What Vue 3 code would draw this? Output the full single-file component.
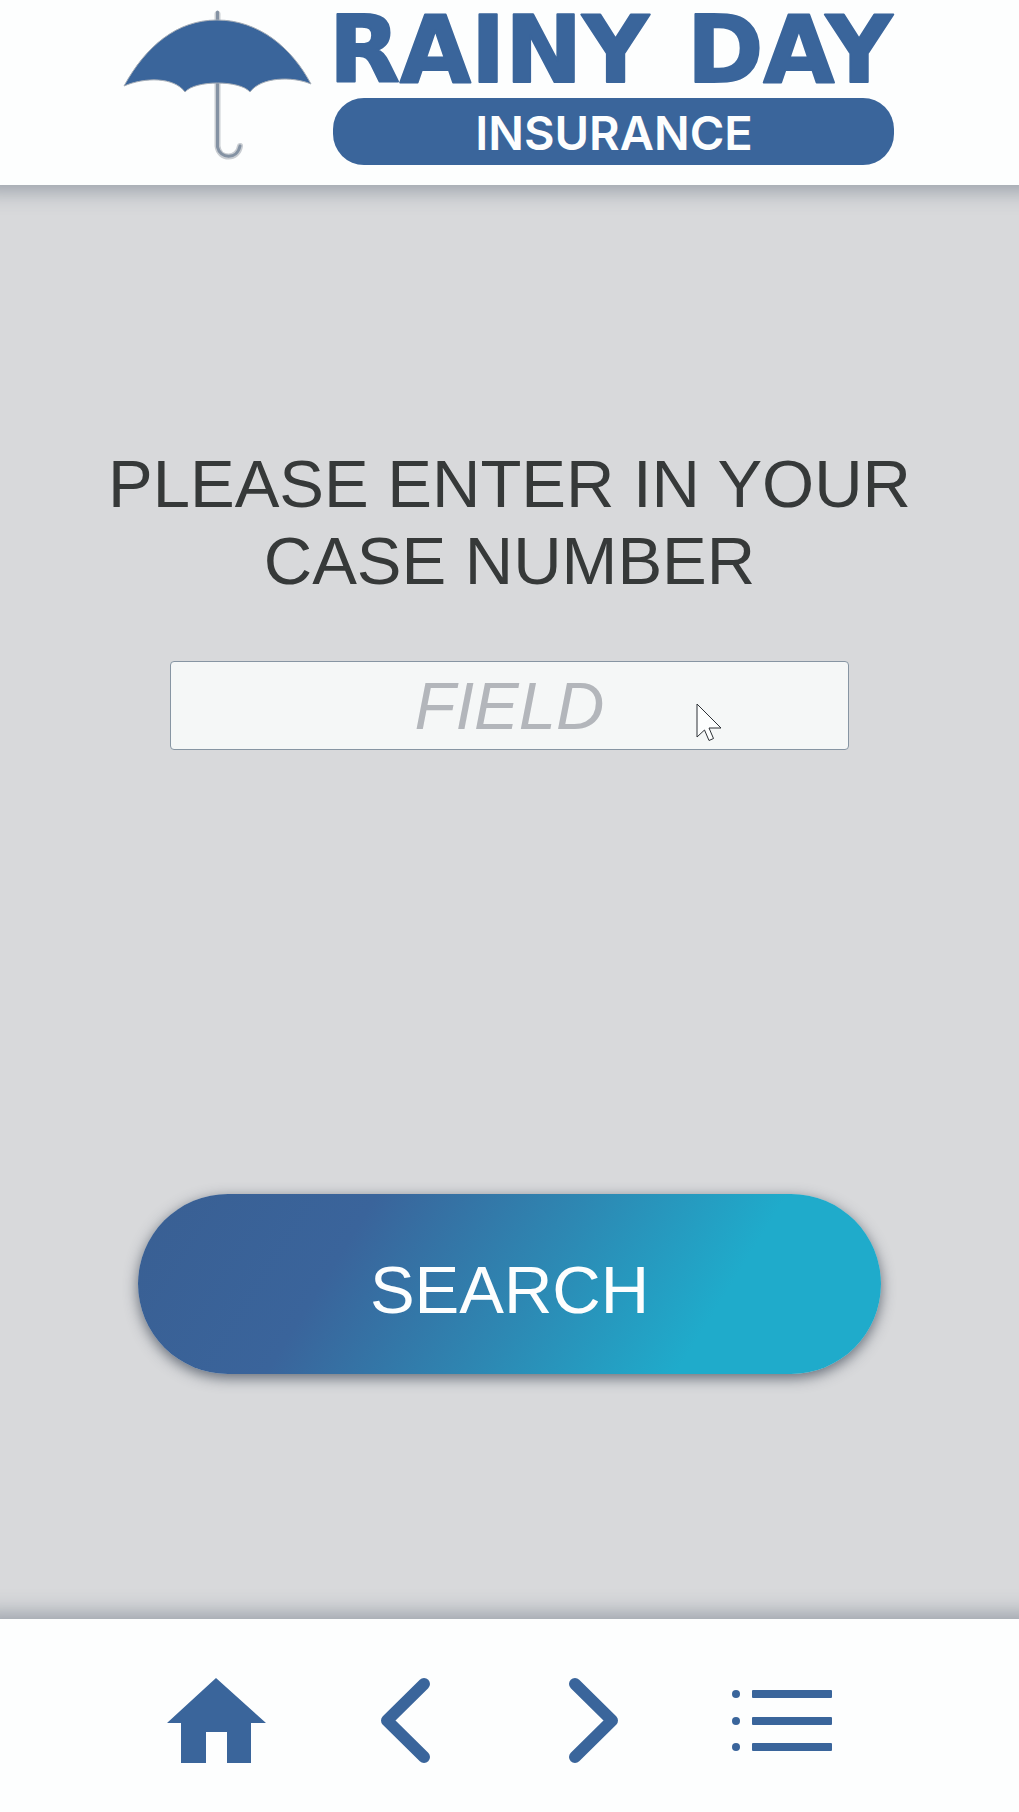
<script setup>
import { ref } from 'vue'

const caseNumber = ref('')
</script>

<template>
  <div class="page">
    <header class="header">
      <svg class="logo" viewBox="0 0 774 156" role="img" aria-label="Rainy Day Insurance">
        <g fill="none" stroke="#c9cdd2" stroke-width="6" stroke-linecap="round">
          <path d="M94.500 4V12M94.500 72V136C96 150 115 150 117 136" />
        </g>
        <path d="M94.500 2V12M94.500 72V137C97 149 114 150 117 136" fill="none" stroke="#8492a3" stroke-width="3" stroke-linecap="round" />
        <path
          d="M1 76C23 36 54 10 94 10C136 10 169 38 188 74C169 66 138 67 127 82C117 70 72 70 62 82C51 67 22 67 1 76Z"
          fill="#3a659b" stroke="#a5adb7" stroke-width="1" stroke-linejoin="round"
        />
        <g class="logo-name">
          <text x="206" y="72">RAINY</text>
          <text x="564" y="72">DAY</text>
        </g>
        <rect x="210" y="88" width="561" height="67" rx="31" fill="#3a659b" />
        <text class="logo-sub" x="491" y="140" text-anchor="middle">INSURANCE</text>
      </svg>
    </header>

    <main class="main">
      <form class="form" @submit.prevent>
        <label class="title" for="case-number">PLEASE ENTER IN YOUR CASE NUMBER</label>
        <div class="field">
          <input id="case-number" v-model="caseNumber" class="input" type="text" placeholder="FIELD" />
          <svg class="pointer" width="27" height="40" viewBox="0 0 27 40" aria-hidden="true">
            <path d="M1 1V34L8.500 27L13 37.500L17.500 35.500L13 25H25Z" fill="#fdfefe" stroke="#2d3136" stroke-width="1" />
          </svg>
        </div>
        <button class="search" type="submit">SEARCH</button>
      </form>
    </main>

    <footer class="footer">
      <nav class="nav" aria-label="Main">
        <div class="pair">
          <button type="button" aria-label="Home">
            <svg width="100" height="86" viewBox="0 0 100 86">
              <path d="M49 1L99 46H84V86H60V55H39V86H14V46H0Z" fill="#3a659b" />
            </svg>
          </button>
          <button type="button" aria-label="Back">
            <svg width="50" height="86" viewBox="0 0 50 86">
              <path d="M44 7L7 43.500L44 80" />
            </svg>
          </button>
        </div>
        <div class="pair">
          <button type="button" aria-label="Forward">
            <svg width="50" height="86" viewBox="0 0 50 86">
              <path d="M7 7L44 43.500L7 80" />
            </svg>
          </button>
          <button type="button" aria-label="Menu">
            <svg width="101" height="86" viewBox="0 0 101 86">
              <g fill="#3a659b">
                <circle cx="5" cy="17" r="4" />
                <circle cx="5" cy="44" r="4" />
                <circle cx="5" cy="70" r="4" />
                <rect x="21" y="13" width="80" height="8" rx="1" />
                <rect x="21" y="40" width="80" height="8" rx="1" />
                <rect x="21" y="66" width="80" height="8" rx="1" />
              </g>
            </svg>
          </button>
        </div>
      </nav>
    </footer>
  </div>
</template>

<style>
body {
  margin: 0;
  background: #d8d9db;
}
</style>

<style scoped>
.page {
  display: flex;
  flex-direction: column;
  min-height: 100vh;
  overflow: hidden;
  background: #d8d9db;
  font-family: "Liberation Sans", Arial, sans-serif;
}

.header {
  display: flex;
  justify-content: center;
  padding: 10px 0 19px;
  background: #fdfefe;
  box-shadow: 0 -14px 20px 20px rgba(60, 74, 95, 0.4);
}

.logo {
  width: 774px;
  max-width: 100%;
  height: auto;
  overflow: visible;
}

.logo-name {
  font: 700 92px "DejaVu Sans", sans-serif;
  fill: #3a659b;
  stroke: #3a659b;
  stroke-width: 2px;
  stroke-linejoin: round;
}

.logo-sub {
  font: 600 47px Inter, sans-serif;
  fill: #fdfefe;
}

.main {
  display: flex;
  flex: 1;
  padding: 260px 80px 245px;
}

.form {
  display: flex;
  flex: 1;
  flex-direction: column;
  align-items: center;
}

.title {
  color: #363939;
  font-size: 67px;
  line-height: 77px;
  text-align: center;
}

.field {
  position: relative;
  width: 100%;
  max-width: 679px;
  margin: 62px 0 100px;
}

.input {
  display: block;
  box-sizing: border-box;
  width: 100%;
  height: 89px;
  padding: 0 16px;
  border: 1px solid #8795a3;
  border-radius: 4px;
  background: #f5f7f7;
  color: #363939;
  font: 67px "Liberation Sans", Arial, sans-serif;
  text-align: center;
  outline: none;
}

.input::placeholder {
  color: #b3b6bb;
  font-style: italic;
  opacity: 1;
}

.pointer {
  position: absolute;
  top: 42px;
  left: 526px;
}

.search {
  width: 100%;
  max-width: 743px;
  height: 180px;
  margin-top: auto;
  padding: 10px 0 0;
  border: 0;
  border-radius: 90px;
  background: linear-gradient(122deg, #395f93 0%, #3a649b 28%, #2d88b3 53%, #1fabcb 76%);
  box-shadow: 0 4px 14px rgba(50, 60, 75, 0.7);
  color: #fdfefe;
  font: 67px "Liberation Sans", Arial, sans-serif;
  cursor: pointer;
}

.footer {
  padding: 58px 20px 49px 0;
  background: #fdfefe;
  box-shadow: 0 14px 20px 20px rgba(60, 74, 95, 0.4);
}

.nav {
  display: flex;
  justify-content: center;
  gap: 138px;
}

.pair {
  display: flex;
  gap: 113px;
}

.nav button {
  padding: 0;
  border: 0;
  background: none;
  cursor: pointer;
}

.nav svg {
  display: block;
  fill: none;
  stroke-width: 12px;
}

.nav svg > path:not([fill]) {
  stroke: #3a659b;
  stroke-linecap: round;
  stroke-linejoin: round;
}
</style>
